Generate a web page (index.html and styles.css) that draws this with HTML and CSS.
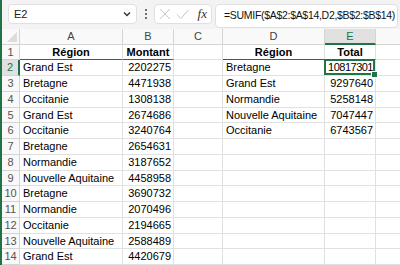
FILE: index.html
```html
<!DOCTYPE html>
<html lang="fr">
<head>
    <meta charset="UTF-8">
    <title>Classeur - SOMME.SI</title>
    <link rel="stylesheet" href="styles.css">
</head>
<body>
    <div class="strip"></div>
    <div class="main">
        <div class="toolbar">
            <div class="namebox">
                <span>E2</span>
                <svg width="8" height="6" viewBox="0 0 8 6"><path d="M1 1.5 L4 4.5 L7 1.5" fill="none" stroke="#333" stroke-width="1.4"/></svg>
            </div>
            <div class="dots"><i></i><i></i><i></i></div>
            <div class="actions">
                <svg width="12" height="12" viewBox="0 0 12 12"><path d="M1 1 L11 11 M11 1 L1 11" stroke="#c4c4c4" stroke-width="1"/></svg>
                <svg width="14" height="12" viewBox="0 0 14 12"><path d="M1 6.5 L5 10.5 L13 1.5" fill="none" stroke="#c4c4c4" stroke-width="1"/></svg>
                <span class="fx">fx</span>
            </div>
            <div class="formula">=SUMIF($A$2:$A$14,D2,$B$2:$B$14)</div>
        </div>

        <div class="sheet">
            <div class="row head">
                <div class="corner"><svg width="10" height="10" viewBox="0 0 10 10"><path d="M10 0 L10 10 L0 10 Z" fill="#dcdcdc"/></svg></div>
                <div>A</div><div>B</div><div>C</div><div>D</div><div class="active">E</div><div class="last"></div>
            </div>
            <div class="row">
                <div class="rn">1</div><div class="title">Région</div><div class="title">Montant</div><div></div><div class="title">Région</div><div class="title">Total</div><div class="last"></div>
            </div>
            <div class="row">
                <div class="rn active">2</div><div>Grand Est</div><div class="num">2202275</div><div></div><div>Bretagne</div><div class="num selected">10817301</div><div class="last"></div>
            </div>
            <div class="row">
                <div class="rn">3</div><div>Bretagne</div><div class="num">4471938</div><div></div><div>Grand Est</div><div class="num">9297640</div><div class="last"></div>
            </div>
            <div class="row">
                <div class="rn">4</div><div>Occitanie</div><div class="num">1308138</div><div></div><div>Normandie</div><div class="num">5258148</div><div class="last"></div>
            </div>
            <div class="row">
                <div class="rn">5</div><div>Grand Est</div><div class="num">2674686</div><div></div><div>Nouvelle Aquitaine</div><div class="num">7047447</div><div class="last"></div>
            </div>
            <div class="row">
                <div class="rn">6</div><div>Occitanie</div><div class="num">3240764</div><div></div><div>Occitanie</div><div class="num">6743567</div><div class="last"></div>
            </div>
            <div class="row">
                <div class="rn">7</div><div>Bretagne</div><div class="num">2654631</div><div></div><div></div><div></div><div class="last"></div>
            </div>
            <div class="row">
                <div class="rn">8</div><div>Normandie</div><div class="num">3187652</div><div></div><div></div><div></div><div class="last"></div>
            </div>
            <div class="row">
                <div class="rn">9</div><div>Nouvelle Aquitaine</div><div class="num">4458958</div><div></div><div></div><div></div><div class="last"></div>
            </div>
            <div class="row">
                <div class="rn">10</div><div>Bretagne</div><div class="num">3690732</div><div></div><div></div><div></div><div class="last"></div>
            </div>
            <div class="row">
                <div class="rn">11</div><div>Normandie</div><div class="num">2070496</div><div></div><div></div><div></div><div class="last"></div>
            </div>
            <div class="row">
                <div class="rn">12</div><div>Occitanie</div><div class="num">2194665</div><div></div><div></div><div></div><div class="last"></div>
            </div>
            <div class="row">
                <div class="rn">13</div><div>Nouvelle Aquitaine</div><div class="num">2588489</div><div></div><div></div><div></div><div class="last"></div>
            </div>
            <div class="row">
                <div class="rn">14</div><div>Grand Est</div><div class="num">4420679</div><div></div><div></div><div></div><div class="last"></div>
            </div>
        </div>
    </div>
</body>
</html>
```

FILE: styles.css
```css
body {
    margin: 0;
    display: flex;
    height: 265px;
    overflow: hidden;
    background: #fff;
    font-family: "Liberation Sans", Arial, sans-serif;
    color: #000;
}

.strip {
    width: 2px;
    background: #217346;
    flex-shrink: 0;
}

.main {
    flex: 1;
    display: flex;
    flex-direction: column;
}

/* Formula bar */
.toolbar {
    height: 29px;
    box-sizing: border-box;
    padding: 4px 2px 0 6px;
    background: #f3f3f3;
    display: flex;
    align-items: flex-start;
}

.namebox {
    width: 129px;
    height: 20px;
    box-sizing: border-box;
    background: #fff;
    border: 1px solid #e0e0e0;
    border-radius: 4px;
    display: flex;
    align-items: center;
    justify-content: space-between;
    padding: 0 5px 0 5px;
    font-size: 11px;
    color: #222;
}

.dots {
    width: 17px;
    height: 20px;
    display: flex;
    flex-direction: column;
    align-items: center;
    justify-content: center;
    gap: 2px;
}

.dots i {
    width: 2px;
    height: 2px;
    background: #444;
    border-radius: 1px;
}

.actions {
    width: 58px;
    height: 20px;
    box-sizing: border-box;
    background: #fff;
    border: 1px solid #e0e0e0;
    border-radius: 4px;
    display: flex;
    align-items: center;
    padding: 0 4px 0 4px;
    gap: 5px;
}

.fx {
    font-family: "Liberation Serif", serif;
    font-style: italic;
    font-size: 13px;
    color: #333;
    margin-left: 3px;
}

.formula {
    flex: 1;
    height: 24px;
    box-sizing: border-box;
    margin-left: 3px;
    background: #fff;
    border: 1px solid #e0e0e0;
    border-radius: 4px;
    padding: 4px 0 0 8px;
    font-size: 10.5px;
    letter-spacing: -0.3px;
    white-space: nowrap;
    color: #111;
}

/* Grid */
.row {
    display: grid;
    grid-template-columns: 18px 103px 51px 49px 102px 51px 1fr;
    height: 15.75px;
    font-size: 11px;
}

.row > div {
    box-sizing: border-box;
    border-right: 1px solid #e1e1e1;
    border-bottom: 1px solid #e1e1e1;
    padding: 0 3px;
    line-height: 15px;
    white-space: nowrap;
    overflow: hidden;
}

.row > .last {
    border-right: none;
}

.head {
    height: 16px;
    background: #f9f9f9;
    color: #444;
}

.head > div {
    text-align: center;
    border-right-color: #d4d4d4;
    border-bottom-color: #d4d4d4;
}

.head > .corner {
    display: flex;
    align-items: flex-end;
    justify-content: flex-end;
    padding: 0 2px 2px 0;
}

.head > .active {
    background: #e1e1e1;
    color: #217346;
    border-bottom: 2px solid #217346;
}

.row > .rn {
    background: #f9f9f9;
    color: #555;
    text-align: center;
    padding: 0;
    border-right-color: #d4d4d4;
    border-bottom-color: #d4d4d4;
}

.row > .rn.active {
    background: #e1e1e1;
    color: #217346;
    border-right: 2px solid #217346;
}

.row > .title {
    font-weight: bold;
    text-align: center;
    border-bottom-color: #555;
}

.row > .num {
    text-align: right;
    padding-right: 2px;
}

.row > .selected {
    position: relative;
    overflow: visible;
    padding-right: 2px;
    letter-spacing: -0.5px;
}

.selected::after {
    content: "";
    position: absolute;
    left: -1px;
    top: -1px;
    right: 0;
    bottom: 0;
    border: 2px solid #217346;
}

.selected::before {
    content: "";
    position: absolute;
    right: -3px;
    bottom: -3px;
    width: 5px;
    height: 5px;
    background: #217346;
    border: 1px solid #fff;
    z-index: 1;
}
```
